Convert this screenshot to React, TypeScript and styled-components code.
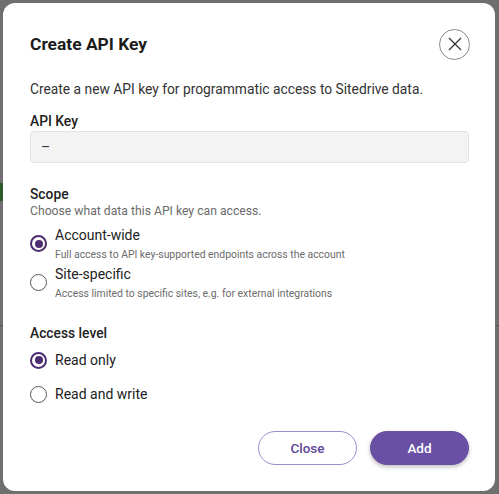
import React from "react";
import styled, { createGlobalStyle } from "styled-components";

const Global = createGlobalStyle`
  html, body { margin: 0; padding: 0; }
  body {
    width: 499px;
    height: 494px;
    overflow: hidden;
    background: #6f6f6f;
    font-family: "Roboto", "Noto Sans", sans-serif;
    -webkit-font-smoothing: antialiased;
  }
`;

const Stage = styled.div`
  position: relative;
  width: 499px;
  height: 494px;
  box-sizing: border-box;
  padding: 3px 4px 3px 3px;
  display: flex;
`;

const Backdrop = styled.div`
  position: absolute;
  inset: 0;
  pointer-events: none;
`;

const Peek = styled.div<{ $top: number; $left?: number; $right?: number; $w: number; $h: number; $c: string }>`
  position: absolute;
  top: ${(p) => p.$top}px;
  ${(p) => (p.$left !== undefined ? `left: ${p.$left}px;` : "")}
  ${(p) => (p.$right !== undefined ? `right: ${p.$right}px;` : "")}
  width: ${(p) => p.$w}px;
  height: ${(p) => p.$h}px;
  background: ${(p) => p.$c};
`;

const Modal = styled.div`
  position: relative;
  flex: 1;
  background: #ffffff;
  border-radius: 12px;
  box-sizing: border-box;
  padding: 25px 26px 26px 27px;
  display: flex;
  flex-direction: column;
  color: #1f1f1f;
`;

const Header = styled.div`
  display: flex;
  align-items: center;
  justify-content: space-between;
  height: 32px;
`;

const Title = styled.h2`
  margin: 0;
  font-size: 17.4px;
  font-weight: 700;
  color: #1c1c1c;
`;

const CloseIcon = styled.button`
  width: 31px;
  height: 31px;
  border-radius: 50%;
  border: 1px solid #8a8a8a;
  background: #fff;
  display: flex;
  align-items: center;
  justify-content: center;
  padding: 0;
  margin-right: -1px;
`;

const Intro = styled.p`
  margin: 19px 0 0;
  font-size: 13.8px;
  color: #333;
  line-height: 20px;
`;

const Label = styled.div<{ $mt: number }>`
  margin-top: ${(p) => p.$mt}px;
  font-size: 13.8px;
  font-weight: 500;
  color: #222;
  line-height: 20px;
`;

const Input = styled.div`
  height: 30px;
  border: 1px solid #e2e2e2;
  background: #f3f3f3;
  border-radius: 4px;
  display: flex;
  align-items: center;
  padding-left: 10px;
  font-size: 14px;
  color: #333;
`;

const Hint = styled.div`
  margin-top: -2px;
  font-size: 12.2px;
  color: #6b6b6b;
  line-height: 18px;
`;

const Options = styled.div<{ $gap: number; $mt: number }>`
  display: flex;
  flex-direction: column;
  gap: ${(p) => p.$gap}px;
  margin-top: ${(p) => p.$mt}px;
`;

const Option = styled.label<{ $center?: boolean }>`
  display: flex;
  align-items: ${(p) => (p.$center ? "center" : "flex-start")};
  gap: 8px;
`;

const Radio = styled.span<{ $on?: boolean; $mt?: number }>`
  flex: none;
  box-sizing: border-box;
  width: 17px;
  height: 17px;
  margin-top: ${(p) => p.$mt ?? 0}px;
  border-radius: 50%;
  border: ${(p) => (p.$on ? "2px solid #4b2c6f" : "1.5px solid #555")};
  display: flex;
  align-items: center;
  justify-content: center;
  &::after {
    content: "";
    display: ${(p) => (p.$on ? "block" : "none")};
    width: 8px;
    height: 8px;
    border-radius: 50%;
    background: #4b2c6f;
  }
`;

const OptText = styled.div`
  display: flex;
  flex-direction: column;
`;

const OptTitle = styled.span`
  font-size: 14px;
  color: #222;
  line-height: 20px;
`;

const OptSub = styled.span`
  font-size: 10.4px;
  color: #6b6b6b;
  line-height: 19px;
`;

const Footer = styled.div`
  margin-top: auto;
  display: flex;
  justify-content: flex-end;
  gap: 13px;
`;

const Button = styled.button<{ $primary?: boolean }>`
  width: 99px;
  height: 34px;
  border-radius: 17px;
  font-family: inherit;
  font-size: 13.5px;
  font-weight: 500;
  cursor: pointer;
  border: 1px solid ${(p) => (p.$primary ? "#6a50a5" : "#a08bcb")};
  background: ${(p) => (p.$primary ? "#6a50a5" : "#fff")};
  color: ${(p) => (p.$primary ? "#fff" : "#5e469a")};
  box-shadow: ${(p) => (p.$primary ? "0 2px 4px rgba(0,0,0,0.25)" : "none")};
`;

export default function App() {
  return (
    <>
      <Global />
      <Stage>
        <Backdrop>
          <Peek $top={183} $left={0} $w={3} $h={18} $c="#2f5a2a" />
          <Peek $top={325} $left={0} $w={3} $h={1} $c="#555" />
          <Peek $top={325} $right={0} $w={4} $h={1} $c="#555" />
        </Backdrop>
        <Modal>
          <Header>
            <Title>Create API Key</Title>
            <CloseIcon aria-label="Close">
              <svg width="14" height="14" viewBox="0 0 14 14">
                <path d="M1 1L13 13M13 1L1 13" stroke="#333" strokeWidth="1.3" fill="none" />
              </svg>
            </CloseIcon>
          </Header>
          <Intro>Create a new API key for programmatic access to Sitedrive data.</Intro>
          <Label $mt={12}>API Key</Label>
          <Input>–</Input>
          <Label $mt={21}>Scope</Label>
          <Hint>Choose what data this API key can access.</Hint>
          <Options $gap={0} $mt={5}>
            <Option>
              <Radio $on $mt={10} />
              <OptText>
                <OptTitle>Account-wide</OptTitle>
                <OptSub>Full access to API key-supported endpoints across the account</OptSub>
              </OptText>
            </Option>
            <Option>
              <Radio $mt={10} />
              <OptText>
                <OptTitle>Site-specific</OptTitle>
                <OptSub>Access limited to specific sites, e.g. for external integrations</OptSub>
              </OptText>
            </Option>
          </Options>
          <Label $mt={20}>Access level</Label>
          <Options $gap={14} $mt={7}>
            <Option $center>
              <Radio $on />
              <OptTitle>Read only</OptTitle>
            </Option>
            <Option $center>
              <Radio />
              <OptTitle>Read and write</OptTitle>
            </Option>
          </Options>
          <Footer>
            <Button>Close</Button>
            <Button $primary>Add</Button>
          </Footer>
        </Modal>
      </Stage>
    </>
  );
}
